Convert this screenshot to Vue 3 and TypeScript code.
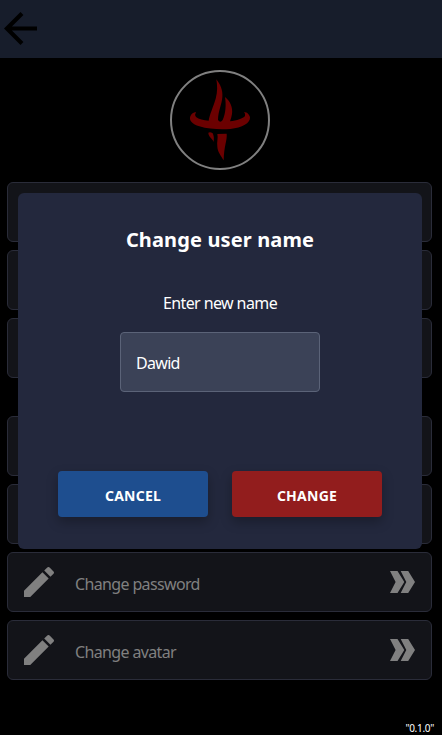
<script setup lang="ts">
import { ref } from 'vue'

interface SettingsRow {
  id: number
  label?: string
}

const firstGroup: SettingsRow[] = [{ id: 1 }, { id: 2 }, { id: 3 }]
const secondGroup: SettingsRow[] = [
  { id: 4 },
  { id: 5 },
  { id: 6, label: 'Change password' },
  { id: 7, label: 'Change avatar' },
]
const userName = ref('Dawid')
const version = '"0.1.0"'
</script>

<template>
  <div class="page">
    <header class="topbar">
      <svg class="back" viewBox="4 4 16 16">
        <path d="M20 11H7.83l5.59-5.59L12 4l-8 8 8 8 1.41-1.41L7.83 13H20v-2z" />
      </svg>
    </header>

    <svg class="avatar" viewBox="30 30 300 300">
      <circle cx="180" cy="180" r="147" fill="none" stroke="#808080" stroke-width="6" />
      <g fill="#6b0000">
        <path d="M169 58C181 73 189 91 187 111C186 132 175 151 174 180Q181 190 188 180C197 161 199 134 195 111C211 124 219 143 216 162Q214 174 210 184C231 181 249 176 255 168Q257 161 252 157Q264 155 270 171C272 190 246 203 211 207C183 209 146 208 118 199C97 193 86 181 91 169Q96 157 108 156Q103 164 108 171C116 178 131 181 146 182C149 163 160 140 167 116C173 96 172 76 169 58Z" />
        <path d="M145 218Q151 215 158 220Q163 229 161 246C158 235 145 231 145 218Z" />
        <path d="M172 222L200 221C202 241 192 257 191 301C183 286 173 277 172 260C170 246 175 234 172 222Z" />
      </g>
    </svg>

    <section class="group">
      <div v-for="row in firstGroup" :key="row.id" class="row"></div>
    </section>
    <section class="group">
      <div v-for="row in secondGroup" :key="row.id" class="row">
        <template v-if="row.label">
          <svg class="pencil" viewBox="3 3 18 18">
            <path d="M3 17.25V21h3.75L17.81 9.94l-3.75-3.75L3 17.25zM20.71 7.04c.39-.39.39-1.02 0-1.41l-2.34-2.34c-.39-.39-1.02-.39-1.41 0l-1.83 1.83 3.75 3.75 1.83-1.83z" />
          </svg>
          <span class="label">{{ row.label }}</span>
          <svg class="chevrons" viewBox="0 0 25 22">
            <path d="M0 0H7.5L14.3 11L7.5 22H0L5.6 11Z" />
            <path d="M10.7 0H18.2L25 11L18.2 22H10.7L16.3 11Z" />
          </svg>
        </template>
      </div>
    </section>

    <div class="version">{{ version }}</div>

    <div class="modal" role="dialog">
      <h2 class="title">Change user name</h2>
      <label class="prompt" for="user-name">Enter new name</label>
      <input id="user-name" v-model="userName" class="field" type="text" />
      <div class="actions">
        <button class="btn cancel">CANCEL</button>
        <button class="btn change">CHANGE</button>
      </div>
    </div>
  </div>
</template>

<style>
body {
  margin: 0;
  background: #000;
}
</style>

<style scoped>
.page {
  position: relative;
  box-sizing: border-box;
  display: flex;
  flex-direction: column;
  height: 735px;
  overflow: hidden;
  background: #000;
  font-family: Tahoma, "Noto Sans", "Open Sans", sans-serif;
}
.topbar {
  box-sizing: border-box;
  flex: none;
  height: 58px;
  padding: 11.5px 4px;
  background: #171d2b;
}
.back {
  display: block;
  width: 33px;
  height: 33px;
}
.avatar {
  flex: none;
  align-self: center;
  width: 100px;
  height: 100px;
  margin: 12px 2px 12px 0;
}
.group {
  display: flex;
  flex-direction: column;
  gap: 8px;
  padding: 0 10px 0 7px;
}
.group + .group {
  margin-top: 38px;
}
.row {
  box-sizing: border-box;
  display: flex;
  align-items: center;
  height: 60px;
  padding: 0 16px;
  border: 1px solid #2a2c39;
  border-radius: 6px;
  background: #131419;
}
.pencil {
  width: 30px;
  height: 30px;
  fill: #808080;
}
.label {
  flex: 1;
  padding: 4px 0 0 21px;
  color: #808080;
  font-size: 16px;
  line-height: 20px;
  letter-spacing: -0.64px;
}
.chevrons {
  width: 25px;
  height: 22px;
  fill: #808080;
}
.version {
  margin-top: auto;
  padding: 0 8px 0 0;
  color: #fff;
  font-size: 10px;
  line-height: 14px;
  letter-spacing: -0.3px;
  text-align: right;
}
.modal {
  position: absolute;
  top: 193px;
  left: 18px;
  box-sizing: border-box;
  display: flex;
  flex-direction: column;
  align-items: center;
  width: 404px;
  height: 356px;
  padding: 32px 40px;
  border-radius: 6px;
  background: #23283d;
  color: #fff;
}
.title {
  margin: 0;
  font-size: 20px;
  font-weight: 700;
  line-height: 30px;
  letter-spacing: 0.13px;
}
.prompt {
  margin-top: 36px;
  font-size: 16px;
  line-height: 24px;
  letter-spacing: -0.6px;
}
.field {
  box-sizing: border-box;
  width: 200px;
  height: 60px;
  margin-top: 17px;
  padding: 2px 15px 0;
  border: 1px solid #5b6378;
  border-radius: 4px;
  outline: none;
  background: #3b4257;
  color: #fff;
  font: 16px Tahoma, "Noto Sans", "Open Sans", sans-serif;
  letter-spacing: -0.7px;
}
.actions {
  display: flex;
  gap: 24px;
  margin-top: 79px;
}
.btn {
  width: 150px;
  height: 46px;
  padding: 2px 0 0;
  border: 0;
  border-radius: 4px;
  color: #fff;
  font: 700 14px Tahoma, "Noto Sans", "Open Sans", sans-serif;
  letter-spacing: 0.25px;
  box-shadow: 0 5px 12px rgba(0, 0, 0, 0.28);
}
.cancel {
  background: #1e4e8f;
}
.change {
  background: #921d1d;
}
</style>
